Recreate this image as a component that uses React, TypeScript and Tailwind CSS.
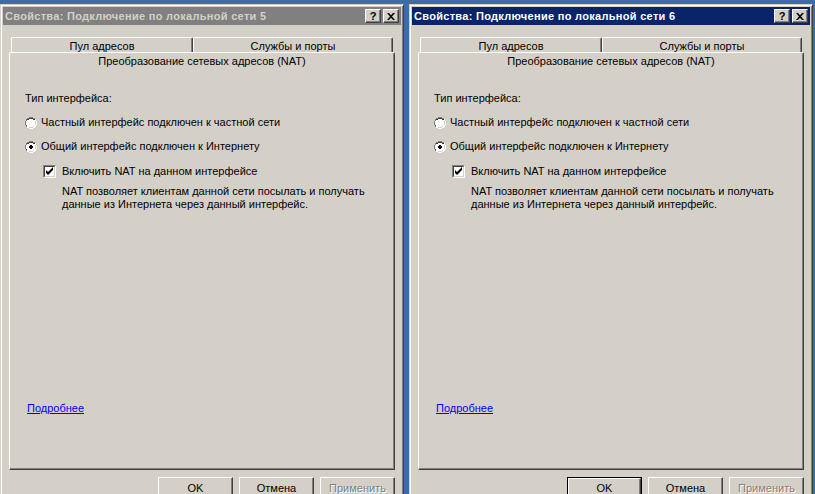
import React from 'react';

const font = { fontFamily: '"Liberation Sans", Arial, sans-serif' };

function Radio({ checked }: { checked: boolean }) {
  return (
    <svg width="12" height="12" viewBox="0 0 12 12" className="shrink-0">
      <path d="M4 0h4v1h2v1h1v2h1v4h-1v2h-1v1h-2v1h-4v-1h-2v-1h-1v-2h-1v-4h1v-2h1v-1h2z" fill="#ffffff" />
      <path d="M4 0h4v1h2v1h-2v-1h-4v1h-2v2h-1v4h1v2h-1v-2h-1v-4h1v-2h1v-1h2z" fill="#808080" />
      <path d="M4 1h4v1h2v1h-2v-1h-4v1h-2v1h-1v4h1v1h-1v-1h0v-4h1v-2h2z" fill="#404040" />
      <path d="M10 2h1v2h1v4h-1v2h-1v1h-2v1h-4v-1h4v-1h2v-2h1v-4h-1z" fill="#ffffff" />
      <path d="M10 3h0v1h1v4h-1v1h-1v1h-1v1h-4v-1h4v-1h2v-2h0v-3z" fill="#d4d0c8" />
      {checked && <path d="M5 4h2v1h1v2h-1v1h-2v-1h-1v-2h1z" fill="#000000" />}
    </svg>
  );
}

function Checkbox() {
  return (
    <div className="w-[13px] h-[13px] shrink-0 border border-[#808080] border-r-white border-b-white">
      <div className="w-full h-full bg-white border border-[#404040] border-r-[#d4d0c8] border-b-[#d4d0c8]">
        <svg width="9" height="9" viewBox="0 0 9 9" className="block">
          <path d="M1 3v3l2 2l5-5v-3l-5 5z" fill="#000000" />
        </svg>
      </div>
    </div>
  );
}

function CaptionButton({ children }: { children: React.ReactNode }) {
  return (
    <div className="w-[16px] h-[14px] bg-[#d4d0c8] border border-white border-r-[#404040] border-b-[#404040] shadow-[inset_-1px_-1px_#808080] flex items-center justify-center">
      {children}
    </div>
  );
}

function PushButton({ label, isDefault, disabled }: { label: string; isDefault?: boolean; disabled?: boolean }) {
  return (
    <div className={isDefault ? 'w-[75px] h-[23px] border border-black' : 'w-[75px] h-[23px]'}>
      <div className="w-full h-full border border-white border-r-[#404040] border-b-[#404040] shadow-[inset_-1px_-1px_#808080] flex items-center justify-center">
        <span
          className={disabled ? 'text-[11px] text-[#808080] [text-shadow:1px_1px_#ffffff]' : 'text-[11px] text-black'}
          style={font}
        >
          {label}
        </span>
      </div>
    </div>
  );
}

function PropertiesWindow({ num, active }: { num: number; active: boolean }) {
  return (
    <div className="w-[404px] h-[520px] shrink-0 bg-[#d4d0c8] border border-[#d4d0c8] border-r-[#404040] border-b-[#404040] shadow-[inset_1px_1px_#ffffff,inset_-1px_-1px_#808080] p-[2px] flex flex-col">
      <div
        className={
          active
            ? 'h-[18px] bg-[#0a246a] flex items-center pl-[2px] pr-[2px]'
            : 'h-[18px] bg-[#808080] flex items-center pl-[2px] pr-[2px]'
        }
      >
        <span
          className={
            active
              ? 'flex-1 text-[11px] font-bold tracking-[0.3px] text-white'
              : 'flex-1 text-[11px] font-bold tracking-[0.3px] text-[#d4d0c8]'
          }
          style={font}
        >
          Свойства: Подключение по локальной сети {num}
        </span>
        <div className="flex gap-[2px]">
          <CaptionButton>
            <span className="text-[11px] font-bold leading-none text-black" style={font}>?</span>
          </CaptionButton>
          <CaptionButton>
            <svg width="8" height="7" viewBox="0 0 8 7">
              <path d="M0 0h2l2 2.2l2-2.2h2l-3 3.5l3 3.5h-2l-2-2.2l-2 2.2h-2l3-3.5z" fill="#000000" />
            </svg>
          </CaptionButton>
        </div>
      </div>

      <div className="px-[6px] pt-[12px] flex flex-col" style={font}>
        {/* back row of tabs */}
        <div className="flex px-[2px] h-[15px]">
          <div className="w-[182px] h-[15px] pt-[2px] border-l border-t border-white border-r border-r-[#404040] rounded-tl-[2px] rounded-tr-[2px] shadow-[inset_-1px_0_#808080] flex items-center justify-center">
            <span className="text-[11px] text-black">Пул адресов</span>
          </div>
          <div className="flex-1 h-[15px] pt-[2px] border-l border-t border-white border-r border-r-[#404040] rounded-tl-[2px] rounded-tr-[2px] shadow-[inset_-1px_0_#808080] flex items-center justify-center">
            <span className="text-[11px] text-black">Службы и порты</span>
          </div>
        </div>
        {/* selected tab */}
        <div className="h-[18px] border-l border-t border-white border-r border-r-[#404040] rounded-tl-[2px] rounded-tr-[2px] shadow-[inset_-1px_0_#808080] flex items-center justify-center">
          <span className="text-[11px] text-black">Преобразование сетевых адресов (NAT)</span>
        </div>
        {/* tab page */}
        <div className="h-[400px] border-l border-white border-r border-b border-r-[#404040] border-b-[#404040] shadow-[inset_-1px_-1px_#808080] pl-[15px] flex flex-col text-[11px] leading-[13px] text-black">
          <div className="mt-[22px] h-[13px]">Тип интерфейса:</div>
          <div className="mt-[11px] h-[13px] flex items-center gap-[4px]">
            <Radio checked={false} />
            <span>Частный интерфейс подключен к частной сети</span>
          </div>
          <div className="mt-[11px] h-[13px] flex items-center gap-[4px]">
            <Radio checked={true} />
            <span>Общий интерфейс подключен к Интернету</span>
          </div>
          <div className="mt-[12px] h-[13px] flex items-center gap-[6px] pl-[18px]">
            <Checkbox />
            <span>Включить NAT на данном интерфейсе</span>
          </div>
          <div className="mt-[7px] pl-[37px] flex flex-col">
            <span>NAT позволяет клиентам данной сети посылать и получать</span>
            <span>данные из Интернета через данный интерфейс.</span>
          </div>
          <div className="mt-[191px] pl-[2px]">
            <span className="text-[#0000ff] underline">Подробнее</span>
          </div>
        </div>
        {/* buttons */}
        <div className="mt-[7px] flex justify-end gap-[6px]">
          <PushButton label="OK" isDefault={active} />
          <PushButton label="Отмена" />
          <PushButton label="Применить" disabled />
        </div>
      </div>
    </div>
  );
}

export default function App() {
  return (
    <div className="w-[815px] h-[494px] overflow-hidden bg-[#3a6ea5] flex items-start gap-[5px] pl-[0px] pt-[4px]">
      <PropertiesWindow num={5} active={false} />
      <PropertiesWindow num={6} active={true} />
    </div>
  );
}
